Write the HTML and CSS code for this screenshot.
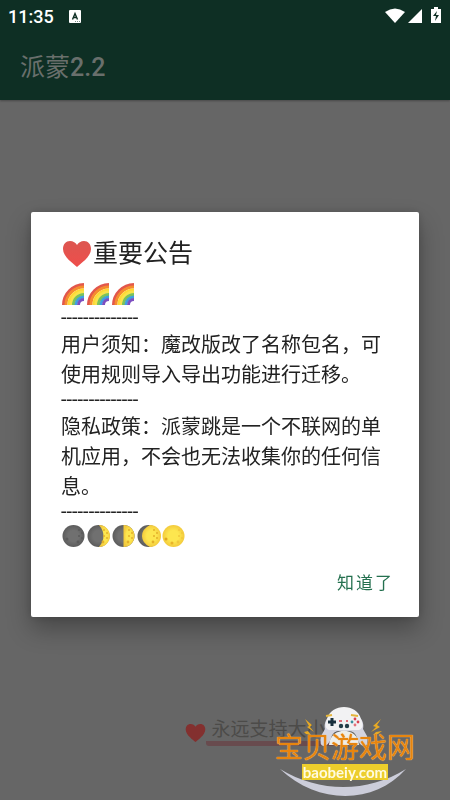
FILE: index.html
```html
<!DOCTYPE html>
<html lang="zh-CN">
<head>
    <meta charset="UTF-8">
    <meta name="viewport" content="width=device-width, initial-scale=1.0">
    <title>派蒙2.2</title>
    <link rel="stylesheet" href="styles.css">
</head>
<body>
    <!-- shared emoji shapes -->
    <svg class="defs" width="0" height="0" aria-hidden="true">
        <defs>
            <linearGradient id="red" x1="0" y1="0" x2="0" y2="1">
                <stop offset="0" stop-color="#dc5650"/>
                <stop offset="1" stop-color="#ef4e4b"/>
            </linearGradient>
            <radialGradient id="yellow">
                <stop offset="0.5" stop-color="#fde64f"/>
                <stop offset="1" stop-color="#f3ca3c"/>
            </radialGradient>
            <radialGradient id="grey">
                <stop offset="0.5" stop-color="#707070"/>
                <stop offset="1" stop-color="#5c5c5c"/>
            </radialGradient>
            <symbol id="heart" viewBox="0 0 30 28">
                <path d="M15 27C12 24 1 17 1 9C1 4 4 1 8 1C11 1 14 3 15 5C16 3 19 1 22 1C26 1 29 4 29 9C29 17 18 24 15 27Z"/>
            </symbol>
            <symbol id="rainbow" viewBox="0 0 25 24">
                <g fill="none" stroke-width="3">
                    <path stroke="#e2574c" d="M2.5 23A21 21 0 0 1 23 2.5"/>
                    <path stroke="#f58b2e" d="M5 23A18 18 0 0 1 23 5"/>
                    <path stroke="#fdd835" d="M8 23A15 15 0 0 1 23 8"/>
                    <path stroke="#f8e34c" d="M10 23A13 13 0 0 1 23 10"/>
                    <path stroke="#7cc35a" d="M12.5 23A10.5 10.5 0 0 1 23 12.5"/>
                    <path stroke="#3f9fe0" d="M15 23A8 8 0 0 1 23 15"/>
                    <path stroke="#7d4fc0" d="M17.5 23A5.5 5.5 0 0 1 23 17.5"/>
                </g>
            </symbol>
            <symbol id="craters" viewBox="0 0 25 24">
                <circle cx="18" cy="6" r="1"/>
                <circle cx="21" cy="9" r="1"/>
                <circle cx="18" cy="12" r="1"/>
                <circle cx="21" cy="14" r="1"/>
                <circle cx="17" cy="18" r="1.4"/>
            </symbol>
            <symbol id="moon-new" viewBox="0 0 25 24">
                <circle cx="12.5" cy="12" r="11" fill="url(#grey)"/>
                <use href="#craters" fill="#5a5a5a"/>
                <circle cx="6" cy="15" r="1.5" fill="#5a5a5a"/>
            </symbol>
            <symbol id="moon-crescent" viewBox="0 0 25 24">
                <circle cx="12.5" cy="12" r="11" fill="url(#grey)"/>
                <path fill="url(#yellow)" d="M13 1A11 11 0 0 1 13 23Q22 12 13 1Z"/>
                <use href="#craters" fill="#e3b02a"/>
            </symbol>
            <symbol id="moon-quarter" viewBox="0 0 25 24">
                <circle cx="12.5" cy="12" r="11" fill="url(#grey)"/>
                <path fill="url(#yellow)" d="M12.5 1A11 11 0 0 1 12.5 23Z"/>
                <use href="#craters" fill="#e3b02a"/>
            </symbol>
            <symbol id="moon-gibbous" viewBox="0 0 25 24">
                <circle cx="12.5" cy="12" r="11" fill="url(#grey)"/>
                <path fill="url(#yellow)" d="M14 1A11 11 0 0 1 14 23Q6 19 6 12Q6 5 14 1Z"/>
                <use href="#craters" fill="#e3b02a"/>
            </symbol>
            <symbol id="moon-full" viewBox="0 0 25 24">
                <circle cx="12.5" cy="12" r="11" fill="url(#yellow)"/>
                <use href="#craters" fill="#f0c83c"/>
                <circle cx="5" cy="15" r="1.5" fill="#dfa51f"/>
                <circle cx="11" cy="19" r="1.5" fill="#e9b32a"/>
            </symbol>
        </defs>
    </svg>

    <div class="screen">
        <header class="app-bar">
            <div class="status">
                <span class="clock">11:35</span>
                <svg class="ime" width="12" height="13" viewBox="0 0 12 13">
                    <rect width="12" height="13" rx="1" fill="#fff"/>
                    <path d="M3.5 9.5L6 3.5L8.5 9.5M4.5 7.5H7.5" fill="none" stroke="#0e2f24" stroke-width="1.4"/>
                    <path d="M6 11.5H11" stroke="#7b8f88" stroke-dasharray="1 1"/>
                </svg>
                <svg class="signals" width="58" height="18" viewBox="0 0 58 18" fill="#fff">
                    <path d="M1 5Q11 -2 21 5L11 16Z"/>
                    <path d="M38 2V16H24Z"/>
                    <path d="M50 0H54V2H57V16H47V2H50Z"/>
                    <path d="M53 4L49 9H52L51 14L55 8H52Z" fill="#0e2f24"/>
                </svg>
            </div>
            <h1 class="app-title">派蒙<b>2.2</b></h1>
        </header>
        <main class="content"></main>
        <footer class="support">
            <svg class="dim-heart" width="21" height="20"><use href="#heart"/></svg>
            <span class="support-text">永远支持大小姐</span>
        </footer>
    </div>

    <div class="overlay">
        <section class="dialog" role="dialog" aria-labelledby="notice-title">
            <h2 class="dialog-title" id="notice-title">
                <svg width="32" height="28" fill="url(#red)"><use href="#heart"/></svg>重要公告
            </h2>
            <div class="emojis">
                <svg><use href="#rainbow"/></svg>
                <svg><use href="#rainbow"/></svg>
                <svg><use href="#rainbow"/></svg>
            </div>
            <p class="dashes">--------------</p>
            <p class="text">用户须知：魔改版改了名称包名，可使用规则导入导出功能进行迁移。</p>
            <p class="dashes">--------------</p>
            <p class="text">隐私政策：派蒙跳是一个不联网的单机应用，不会也无法收集你的任何信息。</p>
            <p class="dashes">--------------</p>
            <div class="emojis">
                <svg><use href="#moon-new"/></svg>
                <svg><use href="#moon-crescent"/></svg>
                <svg><use href="#moon-quarter"/></svg>
                <svg><use href="#moon-gibbous"/></svg>
                <svg><use href="#moon-full"/></svg>
            </div>
            <div class="actions">
                <button class="confirm" type="button">知道了</button>
            </div>
        </section>
    </div>

    <div class="watermark">
        <svg class="watermark-art" width="140" height="92" viewBox="0 -2 140 92">
            <!-- gamepad -->
            <path fill="#d3d4e0" d="M54 9H84C88 12 89 17 88 21L92 28Q94 38 89 38Q84 37 82 30Q80 23 74 23H64Q58 23 56 30Q54 37 49 38Q44 38 46 28L50 21C49 17 50 12 54 9Z"/>
            <path fill="#f2f2f3" d="M52 11C56 -5 82 -5 86 11Q90 20 84 22H54Q48 20 52 11Z"/>
            <path fill="#eeeeea" d="M54 37C55 18 83 18 84 37Z"/>
            <path fill="none" stroke="#e5b53b" stroke-width="2" d="M51 8L57 7M76 7L83 8"/>
            <path stroke="#19303d" stroke-width="3" d="M57 10V18M53 14H61"/>
            <g fill="#243e49">
                <circle cx="66" cy="18" r="2.2"/>
                <circle cx="72" cy="18" r="2.2"/>
            </g>
            <path stroke="#d94352" stroke-width="1.5" d="M64 13H67M71 13H73"/>
            <circle cx="80" cy="11" r="1.4" fill="#d94352"/>
            <circle cx="80" cy="17" r="1.4" fill="#e2727b"/>
            <circle cx="77" cy="14" r="1.4" fill="#3b8f9d"/>
            <circle cx="83" cy="14" r="1.4" fill="#d94352"/>
            <path fill="#e8aa23" d="M30 11L37 17L35 19L39 24L32 19L34 18ZM106 11L98 18L101 19L96 24L105 19L102 17ZM29 24L33 23L36 27L31 26ZM107 23L101 24L98 27L103 26Z"/>
            <!-- smile -->
            <path fill="#cccdda" d="M5 61C45 85 92 85 131 61C99 97 43 97 5 61Z"/>
        </svg>
        <div class="watermark-name">宝贝游戏网</div>
        <div class="watermark-site">baobeiy.com</div>
    </div>
</body>
</html>
```
FILE: styles.css
```css
* {
    box-sizing: border-box;
}
body {
    margin: 0;
    background: #666;
    font-family: Roboto, "Noto Sans CJK SC", sans-serif;
    color: #222;
}
h1, h2, p {
    margin: 0;
    font-weight: 400;
}
.defs {
    position: absolute;
}
.screen {
    display: flex;
    flex-direction: column;
    min-height: 100vh;
}
.app-bar {
    padding-bottom: 14px;
    background: #0e2f24;
    box-shadow: 0 1px 2px rgba(0, 0, 0, 0.3);
}
.status {
    display: flex;
    align-items: center;
    height: 32px;
    padding: 0 8px;
    color: #fff;
}
.clock {
    font-size: 18px;
    font-weight: 500;
}
.ime {
    margin-left: 15px;
}
.signals {
    margin-left: auto;
}
.app-title {
    padding: 18px 20px 0;
    font-size: 25px;
    line-height: 36px;
    color: #696f6c;
}
.app-title b {
    font-weight: 500;
}
.content {
    flex: 1;
}
.support {
    display: flex;
    justify-content: center;
    align-items: center;
    padding: 0 0 54px 85px;
}
.dim-heart {
    fill: #83302f;
}
.support-text {
    padding: 0 5px;
    border-bottom: 5px solid #684b4e;
    border-radius: 3px;
    font-size: 19px;
    line-height: 22px;
    color: #4c4b49;
}
.overlay {
    position: fixed;
    inset: 0;
    display: flex;
    align-items: center;
    padding: 29px 31px 0;
}
.dialog {
    width: 100%;
    padding: 26px 31px 16px 30px;
    background: #fff;
    border-radius: 2px;
    box-shadow: 0 12px 24px rgba(0, 0, 0, 0.3), 0 0 8px rgba(0, 0, 0, 0.15);
}
.dialog-title {
    display: flex;
    align-items: center;
    margin-bottom: 12px;
    font-size: 25px;
    line-height: 32px;
}
.emojis {
    display: flex;
    padding-bottom: 2px;
}
.emojis svg {
    width: 25px;
    height: 24px;
}
.dashes {
    padding-bottom: 4px;
    font-size: 20px;
    line-height: 18px;
}
.text {
    font-size: 20px;
    line-height: 30px;
}
.actions {
    display: flex;
    justify-content: flex-end;
    margin-top: 11px;
}
.confirm {
    height: 40px;
    margin-right: -16px;
    padding: 0 10px;
    border: none;
    background: none;
    font-family: inherit;
    font-size: 17px;
    letter-spacing: 2px;
    color: #24704f;
    cursor: pointer;
}
.watermark {
    position: fixed;
    right: 35px;
    bottom: 2px;
    width: 140px;
    height: 92px;
    padding-top: 28px;
    text-align: center;
}
.watermark-art {
    position: absolute;
    left: 0;
    top: 0;
}
.watermark-name {
    position: relative;
    font-size: 28px;
    line-height: 30px;
    white-space: nowrap;
    color: #e8850e;
    text-shadow: 0 0 1px #f5dcb8, 0 0 1px #e8850e;
}
.watermark-site {
    position: relative;
    width: 86px;
    margin: 0 auto;
    background: #edce2c;
    font-family: Lato, sans-serif;
    font-size: 15px;
    line-height: 16px;
    font-weight: 700;
    color: #fffbe0;
}
```
